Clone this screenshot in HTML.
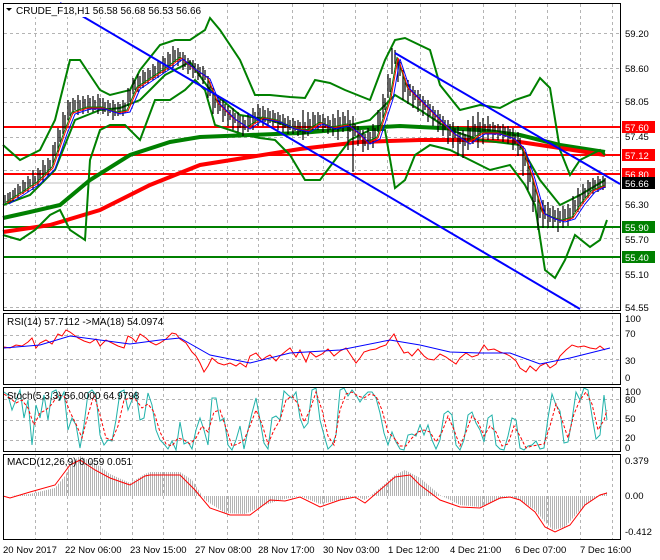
<!DOCTYPE html>
<html><head><meta charset="utf-8"><style>
html,body{margin:0;padding:0;background:#fff;}
svg{display:block;font-family:"Liberation Sans",sans-serif;}
</style></head><body>
<svg width="660" height="560" viewBox="0 0 660 560" xmlns="http://www.w3.org/2000/svg">
<defs>
<pattern id="hp" x="0" y="0" width="2" height="4" patternUnits="userSpaceOnUse"><rect x="0" y="0" width="1" height="4" fill="#b4b4b4"/></pattern>
</defs>
<rect width="660" height="560" fill="#fff"/>
<g stroke="#b4b4b4" stroke-dasharray="3,3" stroke-width="1" fill="none">
<path d="M35.5 4V539M67.5 4V539M100.5 4V539M132.5 4V539M163.5 4V539M195.5 4V539M227.5 4V539M258.5 4V539M292.5 4V539M323.5 4V539M355.5 4V539M387.5 4V539M420.5 4V539M452.5 4V539M483.5 4V539M515.5 4V539M547.5 4V539M580.5 4V539M612.5 4V539"/>
<path d="M4 33.5H620M4 68.5H620M4 102.5H620M4 137.5H620M4 170.5H620M4 205.5H620M4 238.5H620M4 273.5H620M4 307.5H620M4 335.5H620M4 359.5H620M4 399.5H620M4 420.5H620M4 440.5H620"/>
</g>
<rect x="4" y="312" width="616" height="2" fill="#fff"/><rect x="4" y="385" width="616" height="2" fill="#fff"/><rect x="4" y="452" width="616" height="2" fill="#fff"/>
<!-- levels -->
<g stroke-width="2">
<line x1="4" y1="183" x2="620" y2="183" stroke="#c0c0c0" stroke-width="1"/>
<line x1="4" y1="127" x2="620" y2="127" stroke="#f00"/>
<line x1="4" y1="155" x2="620" y2="155" stroke="#f00"/>
<line x1="4" y1="174" x2="620" y2="174" stroke="#f00"/>
<line x1="4" y1="227" x2="620" y2="227" stroke="#008000"/>
<line x1="4" y1="257" x2="620" y2="257" stroke="#008000"/>
</g>
<g fill="none">
<polyline stroke="#008000" stroke-width="4" points="3,218 30,212 60,205 90,180 130,155 170,142 200,137 250,135 300,133 360,128 400,126 440,128 480,130 520,135 560,145 605,152"/>
<polyline stroke="#f00" stroke-width="4" points="3,232 50,225 100,210 150,185 200,165 250,157 300,149 360,142 420,140 470,140 520,142 560,148 605,155"/>
<polyline stroke="#008000" stroke-width="2" points="3,145 20,160 40,150 55,120 70,60 80,60 90,75 100,90 110,95 130,90 140,70 160,45 175,40 190,40 205,30 210,18 220,30 240,60 255,95 270,95 290,97 305,98 315,80 330,83 345,90 370,100 385,60 395,40 405,38 430,50 440,85 460,110 480,105 500,108 515,100 530,95 540,78 550,88 560,150 570,175 580,160 600,150 605,155"/>
<polyline stroke="#008000" stroke-width="2" points="3,235 20,240 35,230 50,215 60,210 70,230 85,240 90,160 100,130 110,125 125,125 140,140 155,100 170,100 185,90 195,80 205,90 215,125 230,130 245,135 260,138 275,140 290,155 305,180 320,180 335,160 350,140 370,130 385,130 395,188 405,180 415,155 430,145 450,150 470,160 490,170 510,165 525,185 535,205 545,270 555,278 565,260 575,235 590,247 600,240 607,220"/>
<polyline stroke="#008000" stroke-width="2" points="3,205 30,195 55,170 75,120 100,110 120,108 140,100 165,75 190,62 210,90 240,115 270,120 300,130 330,130 350,125 370,120 395,95 420,110 450,130 480,140 520,145 540,180 560,205 580,195 605,180"/>
</g>
<path fill="none" stroke="#000" stroke-width="1.2" d="M5 195v8M8 193v10M10 192v10M13 190v12M15 188v10M18 184v14M20 186v8M23 180v14M25 182v10M28 176v16M30 179v8M33 170v20M35 176v8M38 168v18M40 170v10M43 160v22M45 165v10M48 158v18M50 160v10M53 145v20M55 142v14M58 128v24M60 130v12M63 112v22M65 115v14M68 100v20M70 102v14M73 98v16M75 100v10M78 95v20M80 100v10M83 96v18M85 99v10M88 95v18M90 98v12M93 96v16M95 100v10M98 94v20M100 98v12M103 98v16M105 102v10M108 100v16M110 103v10M113 100v20M115 104v12M118 102v14M120 104v10M123 100v16M125 103v10M128 88v18M130 90v12M133 78v16M135 80v10M138 74v18M140 76v12M143 70v18M145 72v12M148 68v16M150 70v10M153 64v16M155 66v12M158 60v18M160 62v12M163 56v18M165 58v14M168 52v18M170 54v12M173 46v22M175 50v12M178 48v18M180 52v10M183 52v18M185 55v12M188 58v16M190 60v10M193 60v18M195 63v10M198 64v16M200 67v10M203 66v18M205 70v10M208 76v22M210 82v14M213 88v26M215 94v14M218 96v18M220 99v12M223 100v22M225 104v12M228 106v20M230 110v10M233 108v22M235 113v10M238 112v20M240 116v12M243 116v20M245 120v10M248 114v18M250 117v10M253 108v22M255 112v12M258 104v22M260 108v14M263 106v20M265 110v12M268 108v18M270 111v12M273 110v16M275 113v10M278 112v18M280 115v10M283 114v18M285 118v10M288 116v18M290 120v10M293 118v16M295 121v10M298 120v16M300 122v10M303 110v30M305 122v12M308 112v24M310 119v10M313 112v18M315 115v12M318 112v18M320 115v10M323 114v18M325 118v10M328 116v18M330 120v10M333 114v22M335 118v12M338 110v30M340 117v12M343 112v20M345 116v10M348 110v40M350 120v12M353 116v56M355 124v12M358 126v20M360 130v10M363 130v22M365 134v12M368 128v22M370 132v12M373 124v24M375 128v12M378 110v22M380 112v14M383 94v24M385 98v12M388 74v24M390 78v14M392 48v26M395 50v14M398 58v24M400 62v14M403 70v30M405 78v14M408 80v24M410 84v12M413 86v22M415 90v10M418 90v22M420 94v12M423 96v20M425 100v10M428 100v22M430 104v12M433 106v20M435 110v10M438 110v22M440 114v12M443 116v20M445 120v10M448 120v24M450 124v12M453 122v26M455 128v10M458 126v30M460 132v12M463 130v28M465 134v12M468 120v30M470 128v12M473 116v28M475 124v12M478 112v36M480 122v14M483 118v26M485 124v10M488 116v24M490 124v10M493 122v18M495 125v10M498 124v16M500 126v10M503 124v18M505 127v10M508 126v18M510 129v10M513 128v22M515 134v10M518 132v24M520 138v12M523 146v30M525 152v14M528 160v30M530 166v16M533 178v34M535 186v16M538 196v34M540 202v16M543 200v28M545 205v14M548 202v26M550 208v14M553 206v22M555 210v12M558 208v24M560 211v12M563 206v22M565 209v12M568 204v22M570 208v12M573 196v22M575 200v12M578 188v24M580 194v12M583 184v20M585 188v10M588 180v18M590 182v10M593 178v16M595 180v10M598 176v16M600 179v10M603 176v14M605 178v10"/>
<g fill="none" stroke-width="1">
<polyline stroke="#008000" transform="translate(2,2)" points="4,200 20,190 35,180 50,165 62,130 70,110 85,105 100,105 115,110 125,108 135,85 150,75 165,65 178,55 190,65 205,75 215,100 230,115 245,125 260,115 275,118 290,125 305,128 318,120 330,125 345,122 355,130 365,140 375,135 388,95 395,55 405,85 420,100 435,115 450,130 465,140 480,130 495,130 510,135 520,145 530,175 540,210 550,215 560,218 570,215 580,200 590,188 603,183"/>
<polyline stroke="#f00" transform="translate(3,3)" points="4,200 20,190 35,180 50,165 62,130 70,110 85,105 100,105 115,110 125,108 135,85 150,75 165,65 178,55 190,65 205,75 215,100 230,115 245,125 260,115 275,118 290,125 305,128 318,120 330,125 345,122 355,130 365,140 375,135 388,95 395,55 405,85 420,100 435,115 450,130 465,140 480,130 495,130 510,135 520,145 530,175 540,210 550,215 560,218 570,215 580,200 590,188 602,183"/>
<polyline stroke="#00f" transform="translate(5,4)" points="4,200 20,190 35,180 50,165 62,130 70,110 85,105 100,105 115,110 125,108 135,85 150,75 165,65 178,55 190,65 205,75 215,100 230,115 245,125 260,115 275,118 290,125 305,128 318,120 330,125 345,122 355,130 365,140 375,135 388,95 395,55 405,85 420,100 435,115 450,130 465,140 480,130 495,130 510,135 520,145 530,175 540,210 550,215 560,218 570,215 580,200 590,188 600,183"/>
</g>
<line x1="60" y1="3" x2="580" y2="309" stroke="#00f" stroke-width="2"/>
<line x1="395" y1="53" x2="620" y2="184" stroke="#00f" stroke-width="2"/>
<!-- RSI -->
<polyline fill="none" stroke="#f00" stroke-width="1" points="4,347 10,348 16,345 22,346 28,342 32,338 36,348 40,343 46,340 52,344 58,334 62,336 66,330 70,332 74,335 78,338 84,341 90,343 96,339 100,346 106,340 112,343 118,346 124,348 128,336 132,338 136,342 140,334 146,338 150,342 156,345 160,343 166,339 172,333 176,334 180,339 186,343 192,352 196,356 200,363 204,372 208,366 212,358 218,363 224,365 230,363 236,366 240,363 246,367 250,356 256,353 262,360 266,357 270,355 276,361 280,356 286,351 290,348 296,357 300,350 306,362 310,352 316,357 322,354 328,349 334,356 340,351 346,348 352,357 356,363 360,358 364,352 370,350 376,349 380,347 386,345 390,339 394,334 398,343 404,353 408,352 412,356 418,349 424,356 428,359 434,360 440,354 446,357 450,360 456,364 460,358 466,353 472,357 478,355 484,345 488,350 494,349 500,352 506,354 510,356 516,361 520,368 526,372 530,366 536,371 540,366 546,363 550,368 556,364 560,356 566,350 572,345 578,347 584,346 590,348 596,349 600,346 605,350"/>
<polyline fill="none" stroke="#00f" stroke-width="1" points="4,348 40,345 70,336 100,340 130,344 160,340 180,338 210,355 250,363 290,353 340,350 390,340 420,345 450,352 480,353 510,353 540,364 570,358 610,348"/>
<!-- Stoch -->
<polyline fill="none" stroke="#20b2aa" stroke-width="1" points="4,392 8,395 12,410 16,400 20,390 24,418 28,400 32,445 36,405 40,418 44,395 48,420 52,392 56,390 60,400 64,392 68,430 72,418 76,425 80,448 84,425 88,393 92,390 96,395 100,435 104,445 108,440 112,441 116,420 120,392 124,390 128,410 132,400 136,392 140,420 144,418 148,393 152,405 156,430 160,440 164,444 168,449 172,441 176,450 180,422 184,444 188,442 192,449 196,430 200,418 204,430 208,445 212,398 216,398 220,421 224,418 228,445 232,450 236,440 240,426 244,449 248,430 252,413 256,398 260,420 264,443 268,449 272,418 276,416 280,420 284,391 288,395 292,398 296,392 300,418 304,428 308,423 312,390 316,388 320,420 324,435 328,449 332,445 336,435 340,390 344,388 348,396 352,390 356,395 360,402 364,396 368,392 372,392 376,398 380,413 384,433 388,445 392,432 396,442 400,449 404,450 408,435 412,434 416,436 420,425 424,435 428,425 432,440 436,449 440,440 444,414 448,411 452,415 456,445 460,450 464,440 468,415 472,412 476,423 480,430 484,442 488,418 492,415 496,445 500,449 504,450 508,436 512,418 516,420 520,448 524,450 528,446 532,445 536,441 540,449 544,448 548,418 552,394 556,405 560,411 564,443 568,442 572,420 576,392 580,400 584,388 588,390 592,416 596,439 600,435 604,395 607,420"/>
<polyline fill="none" stroke="#f00" stroke-width="1" stroke-dasharray="3,2" points="4,394 10,398 16,403 22,400 28,408 34,425 40,413 46,410 52,404 58,395 64,396 70,412 76,424 82,438 88,415 94,395 100,415 106,438 112,440 118,426 124,400 130,398 136,400 142,408 148,404 154,412 160,432 166,444 172,446 178,438 184,440 190,444 196,438 202,426 208,432 214,412 220,410 226,428 232,446 238,444 244,440 250,426 256,410 262,424 268,444 274,430 280,420 286,400 292,396 298,404 304,422 310,410 316,392 322,410 328,436 334,445 340,410 346,394 352,392 358,396 364,398 370,394 376,396 382,410 388,432 394,438 400,446 406,446 412,438 418,432 424,430 430,432 436,442 442,432 448,416 454,430 460,446 466,432 472,416 478,422 484,436 490,426 496,432 502,446 508,444 514,426 520,436 526,448 532,446 538,445 544,444 550,426 556,404 562,420 568,438 574,414 580,400 586,392 592,404 598,430 604,420 607,410"/>
<!-- MACD -->
<polygon fill="url(#hp)" points="5,496 10,496 30,494 55,488 65,476 72,462 80,456 95,463 110,474 130,483 145,474 150,472 180,472 192,480 205,500 225,513 245,514 265,505 280,500 300,496 320,504 340,500 355,496 365,500 380,488 395,475 405,470 420,478 440,495 460,505 480,507 500,499 510,496 520,500 535,510 545,522 553,530 565,527 580,510 595,498 607,492 607,496"/>
<polyline fill="none" stroke="#f00" stroke-width="1" points="3,496 10,498 30,492 55,485 70,465 80,460 95,470 110,478 130,485 145,476 150,475 180,475 195,490 210,508 230,515 250,515 270,500 285,501 300,497 320,507 340,500 355,497 365,503 380,490 395,477 410,475 420,485 440,500 460,507 480,508 500,498 510,497 520,500 535,512 545,527 555,532 570,525 585,505 600,495 607,493"/>
<!-- frames -->
<g fill="none" stroke="#000" stroke-width="1">
<rect x="3.5" y="3.5" width="617" height="307"/>
<rect x="3.5" y="313.5" width="617" height="71"/>
<rect x="3.5" y="387.5" width="617" height="64"/>
<rect x="3.5" y="454.5" width="617" height="85"/>
</g>
<g font-size="10" fill="#000">
<rect x="4" y="4" width="200" height="13" fill="#fff"/>
<text x="16" y="14">CRUDE_F18,H1  56.58 56.68 56.53 56.66</text>
<polygon points="6,8 12,8 9,11" fill="#000"/>
<text x="7" y="325">RSI(14) 57.7112  -&gt;MA(18) 54.0974</text>
<text x="7" y="399">Stoch(5,3,3) 56.0000 64.9798</text>
<text x="7" y="465">MACD(12,26,9) 0.059 0.051</text>
<g font-size="9.5">
<text x="625" y="37">59.20</text>
<text x="625" y="72">58.60</text>
<text x="625" y="105">58.05</text>
<text x="625" y="140">57.45</text>
<text x="625" y="208">56.30</text>
<text x="625" y="243">55.70</text>
<text x="625" y="278">55.10</text>
<text x="625" y="311">54.55</text>
<rect x="622" y="121" width="33" height="12" fill="#f00"/><text x="625" y="131" fill="#fff">57.60</text>
<rect x="622" y="149" width="33" height="12" fill="#f00"/><text x="625" y="159" fill="#fff">57.12</text>
<rect x="622" y="168" width="33" height="12" fill="#f00"/><text x="625" y="178" fill="#fff">56.80</text>
<rect x="622" y="177" width="33" height="12" fill="#000"/><text x="625" y="187" fill="#fff">56.66</text>
<rect x="622" y="221" width="33" height="12" fill="#008000"/><text x="625" y="231" fill="#fff">55.90</text>
<rect x="622" y="251" width="33" height="12" fill="#008000"/><text x="625" y="261" fill="#fff">55.40</text>
<text x="625" y="322">100</text><text x="625" y="337">70</text><text x="625" y="364">30</text><text x="625" y="381">0</text>
<text x="625" y="395">100</text><text x="625" y="403">80</text><text x="625" y="422">50</text><text x="625" y="441">20</text><text x="625" y="451">0</text>
<text x="625" y="464">0.379</text><text x="625" y="499">0.00</text><text x="625" y="535">-0.412</text>
<text x="3" y="553">20 Nov 2017</text>
<text x="65" y="553">22 Nov 06:00</text>
<text x="130" y="553">23 Nov 15:00</text>
<text x="195" y="553">27 Nov 08:00</text>
<text x="258" y="553">28 Nov 17:00</text>
<text x="323" y="553">30 Nov 03:00</text>
<text x="388" y="553">1 Dec 12:00</text>
<text x="450" y="553">4 Dec 21:00</text>
<text x="515" y="553">6 Dec 07:00</text>
<text x="580" y="553">7 Dec 16:00</text>
</g></g>
</svg>
</body></html>
